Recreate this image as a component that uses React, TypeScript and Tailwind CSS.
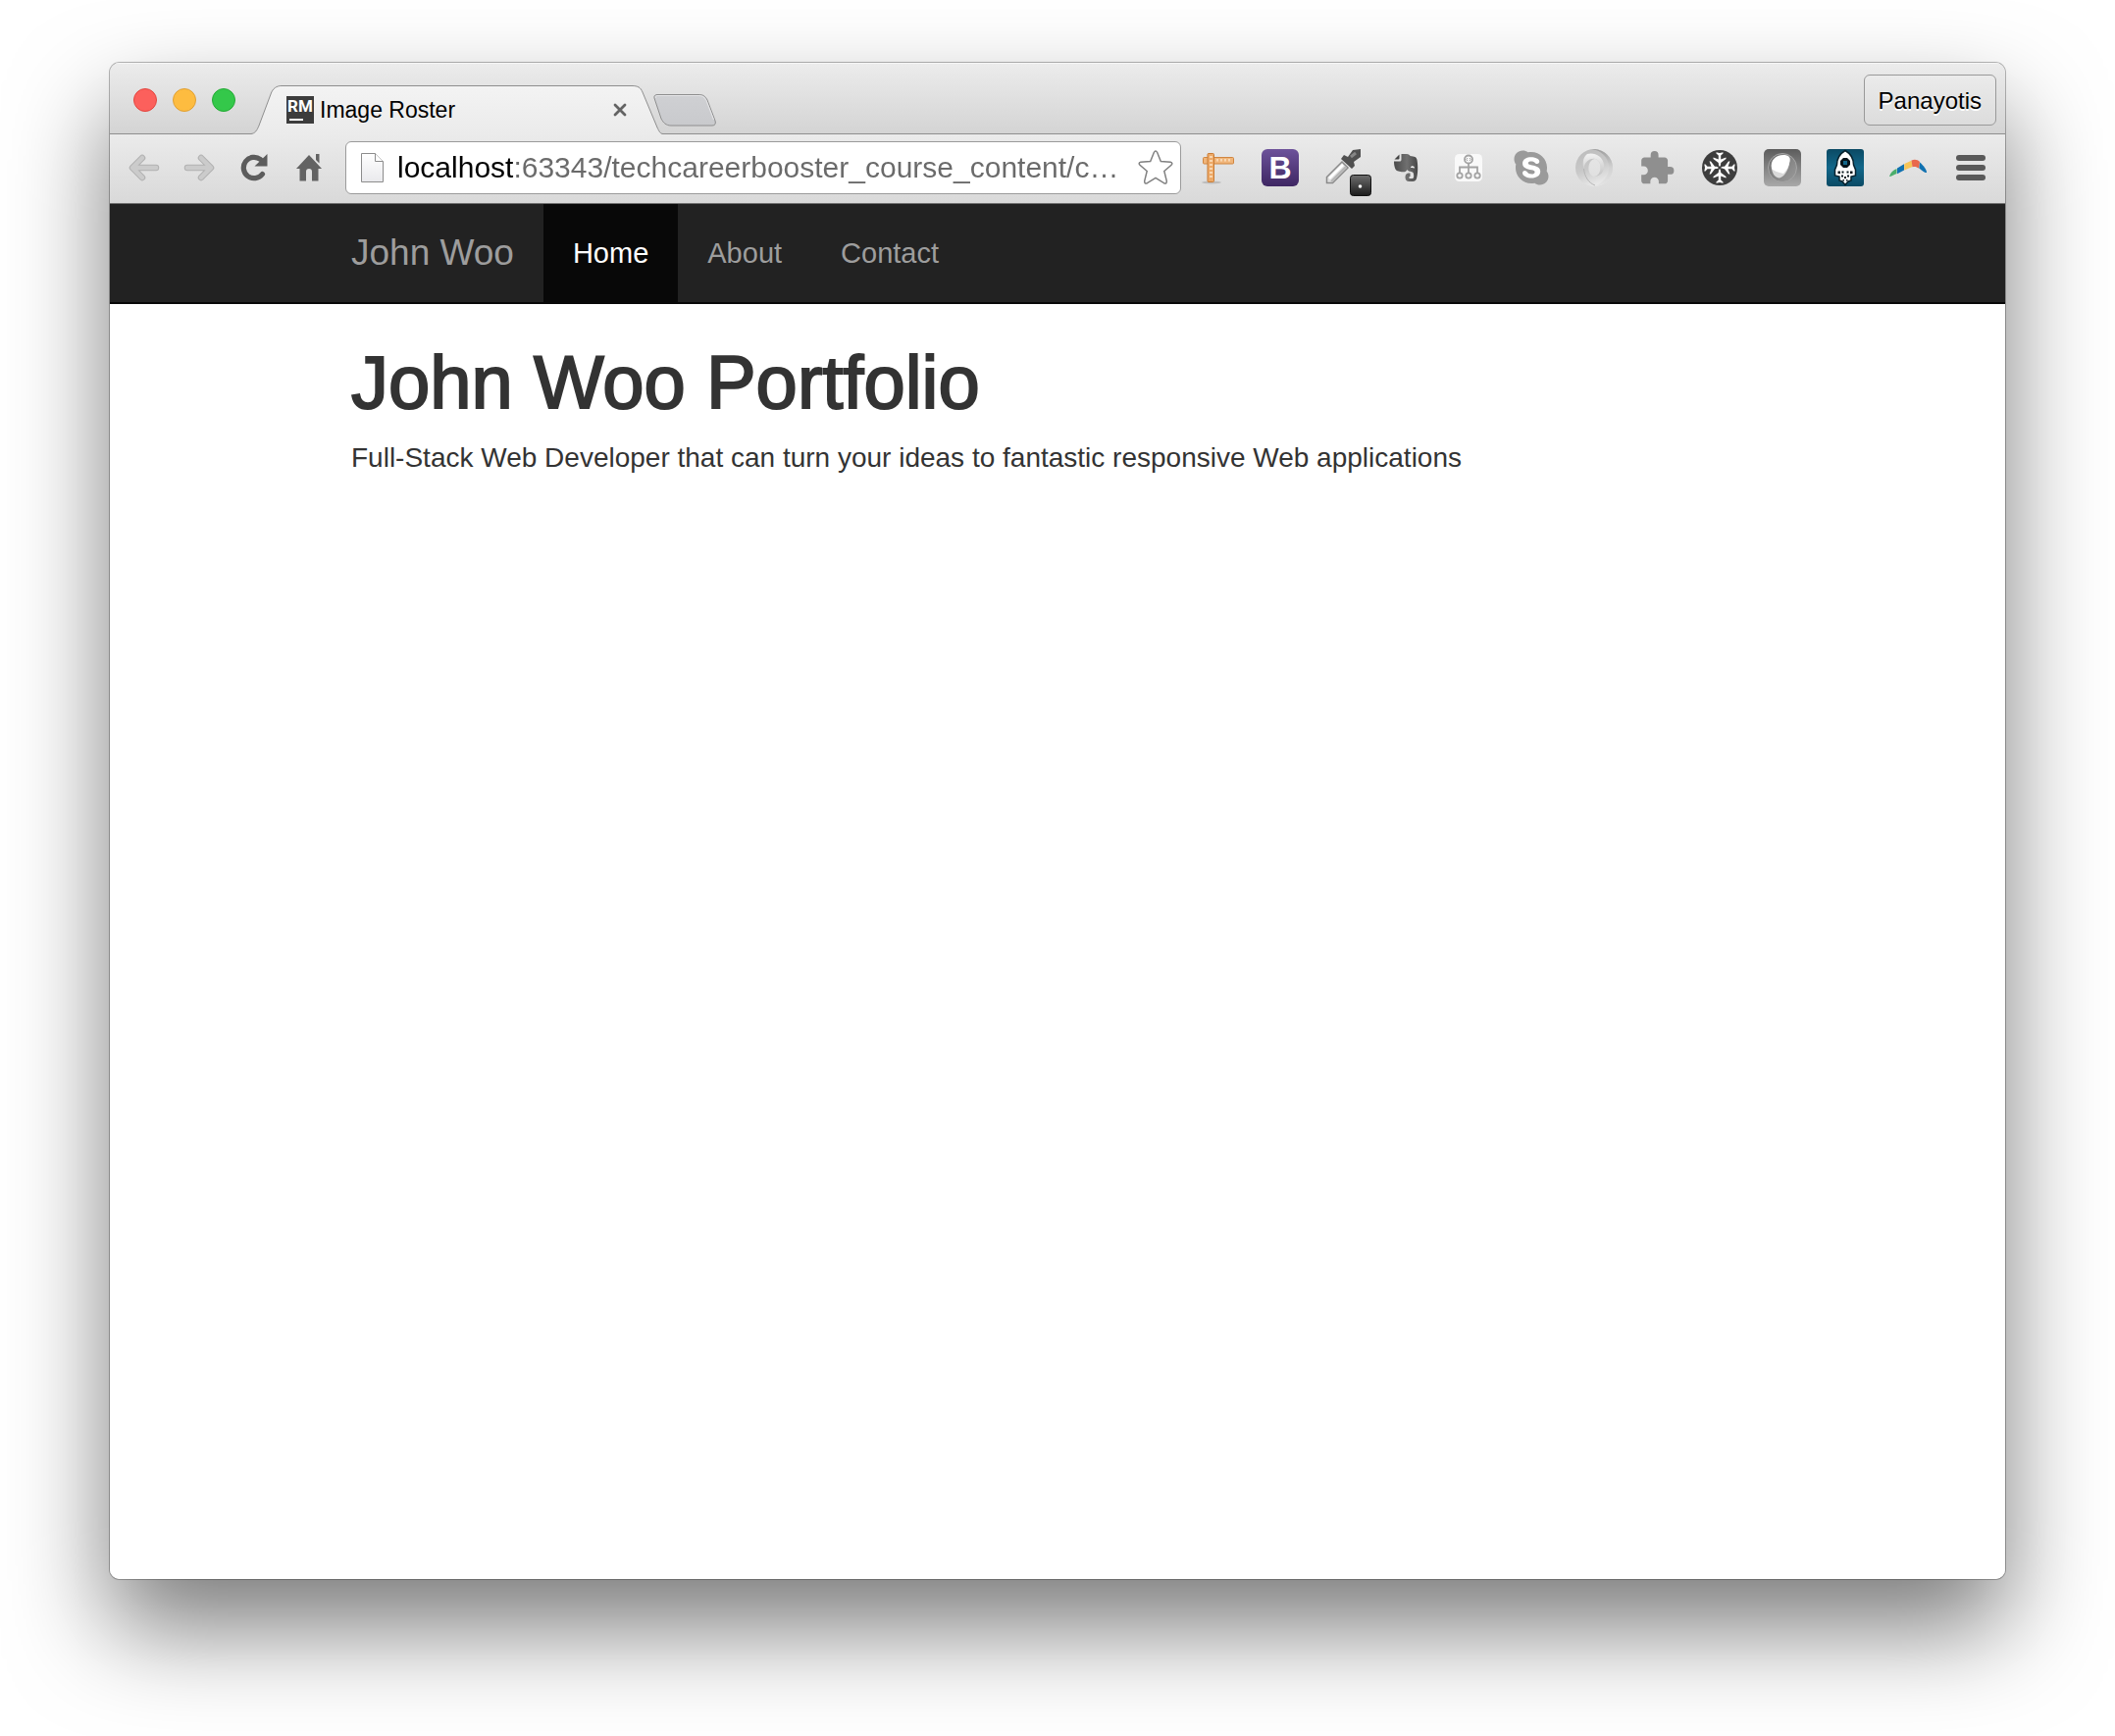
import React from "react";
import { FaSkype } from "react-icons/fa";
import { MdExtension } from "react-icons/md";

const navLinks = [
  { label: "Home", active: true },
  { label: "About", active: false },
  { label: "Contact", active: false },
];

function Tab() {
  return (
    <div className="relative -mb-px flex h-[50px] w-[420px] items-center pr-[37px] pl-9">
      <svg className="absolute inset-0" width="420" height="50" viewBox="0 0 420 50" aria-hidden="true">
        <defs>
          <linearGradient id="tabFill" x1="0" y1="0" x2="0" y2="1">
            <stop offset="0" stopColor="#f3f3f3" />
            <stop offset="1" stopColor="#ebebeb" />
          </linearGradient>
        </defs>
        <path
          d="M0 50 V49.5 C4 49 6 46 8 41 L20 9 C22 3 26 .5 31 .5 H388 C394 .5 397 2 399 7 L414 43 C416 47 417 49.5 420 49.5 V50 Z"
          fill="url(#tabFill)"
        />
        <path
          d="M0 49.5 C4 49 6 46 8 41 L20 9 C22 3 26 .5 31 .5 H388 C394 .5 397 2 399 7 L414 43 C416 47 417 49.5 420 49.5"
          fill="none"
          stroke="#8e8e8e"
        />
      </svg>
      <span className="relative flex h-7 w-7 flex-col items-center bg-[#3c3c3c] font-['Roboto',sans-serif] text-[17px] leading-5 font-bold text-white">
        RM
        <span className="ml-[3px] h-[2px] w-[14px] translate-y-[3px] self-start bg-white" />
      </span>
      <span className="relative ml-[6px] flex-1 text-[23px] text-black">Image Roster</span>
      <button aria-label="Close tab" className="relative">
        <svg width="14" height="14" viewBox="0 0 14 14">
          <path d="M2 2 L12 12 M12 2 L2 12" stroke="#636363" strokeWidth="2.8" strokeLinecap="round" />
        </svg>
      </button>
    </div>
  );
}

function TitleBar() {
  return (
    <div className="flex h-[73px] items-end border-b border-[#8e8e8e] bg-linear-to-b from-[#ececec] to-[#d4d4d4] pr-[9px] pl-6 shadow-[inset_0_1px_0_#f6f6f6]">
      <div className="mb-[22px] flex gap-4">
        <button aria-label="Close" className="h-6 w-6 rounded-full border border-[#e2463f] bg-[#fc605c]" />
        <button aria-label="Minimize" className="h-6 w-6 rounded-full border border-[#e0a034] bg-[#fdbc40]" />
        <button aria-label="Zoom" className="h-6 w-6 rounded-full border border-[#24ab35] bg-[#34c84a]" />
      </div>
      <div className="ml-4 flex items-end">
        <Tab />
        <button aria-label="New tab" className="-ml-[10px] mb-[7px]">
          <svg width="65" height="33" viewBox="0 0 65 33">
            <defs>
              <linearGradient id="newTab" x1="0" y1="0" x2="0" y2="1">
                <stop offset="0" stopColor="#cfd0d3" />
                <stop offset="1" stopColor="#c9cacd" />
              </linearGradient>
            </defs>
            <path
              d="M1 4 C.5 2 1.500 .5 4 .5 H46 C51 .5 53 2 55 6 L63 27 C64 30 63 32 60 32 H18 C13 32 10 29 8 25 Z"
              fill="url(#newTab)"
              stroke="#8e8e8e"
            />
            <path
              d="M2.500 4 C2 2.500 3 1.500 4 1.500 H46 C50 1.500 52 3 54 6.500 L61.500 26"
              fill="none"
              stroke="#e6e6e8"
            />
          </svg>
        </button>
      </div>
      <button className="mb-2 ml-auto h-[52px] rounded-[6px] border border-[#999] bg-linear-to-b from-[#ebebeb] to-[#dcdcdc] px-[14px] pt-[2px] text-2xl text-black [text-shadow:0_2px_0_#fff]">
        Panayotis
      </button>
    </div>
  );
}

function Arrow({ label, flip }: { label: string; flip?: boolean }) {
  const d = "M28 14 H5 M14 4 L4 14 L14 24";
  return (
    <button aria-label={label}>
      <svg width="32" height="28" viewBox="0 0 32 28" fill="none" strokeLinecap="round" strokeLinejoin="round" className={flip ? "-scale-x-100" : ""}>
        <path d={d} stroke="#b2b2b2" strokeWidth="6.500" />
        <path d={d} stroke="#cbcbcb" strokeWidth="4.500" />
      </svg>
    </button>
  );
}

function RulerIcon() {
  return (
    <svg width="38" height="38" viewBox="0 0 38 38">
      <ellipse cx="13" cy="34" rx="10" ry="1.500" fill="#bdbdbd" />
      <rect x="4.500" y="8.500" width="31" height="6.500" rx="1" fill="#f0b57a" stroke="#d08641" />
      <path d="M19 10 V12.500 M23 10 V12.500 M27 10 V12.500 M31 10 V12.500" stroke="#fbe3c6" strokeWidth="1.500" />
      <rect x="9" y="4.500" width="6.500" height="29" rx="1" fill="#eda967" stroke="#c97c36" />
      <path d="M11 8 H14 M11 12 H14 M11 16 H14 M11 20 H14 M11 24 H14 M11 28 H14" stroke="#fbe3c6" strokeWidth="1.500" />
    </svg>
  );
}

function DropperIcon() {
  return (
    <svg width="38" height="38" viewBox="0 0 38 38" className="overflow-visible">
      <defs>
        <linearGradient id="badge" x1="0" y1="0" x2="0" y2="1">
          <stop offset="0" stopColor="#6e6e6e" />
          <stop offset="1" stopColor="#1b1b1b" />
        </linearGradient>
      </defs>
      <path d="M2.500 34.500 V28.500 L18 13 L24 19 L8.500 34.500 Z" fill="#dedede" stroke="#8a8a8a" strokeWidth="1.500" />
      <path d="M5 30 L19 16" stroke="#fff" strokeWidth="2.500" />
      <path d="M7 33 L22 18" stroke="#b5b5b5" strokeWidth="2" />
      <path d="M17 10 L20 6 L24 8 L29 1 L37 0 V8 L30 13 L31 17 L28 20 Z" fill="#505050" />
      <path d="M27 8 L32 4" stroke="#858585" strokeWidth="3" />
      <rect x="26.500" y="26.500" width="21" height="21" rx="3" fill="url(#badge)" stroke="#111" />
      <circle cx="36.500" cy="38" r="1.800" fill="#fff" />
    </svg>
  );
}

function ElephantIcon() {
  return (
    <svg width="38" height="38" viewBox="0 0 38 38">
      <defs>
        <linearGradient id="elephant" x1="0" y1="0" x2="1" y2="0">
          <stop offset="0" stopColor="#4a4a4a" />
          <stop offset=".55" stopColor="#707070" />
          <stop offset="1" stopColor="#464646" />
        </linearGradient>
      </defs>
      <path
        d="M14.500 5 H20 C22 5 23 6 23.500 7 C28 7.500 30 8 30.500 11 C31.600 17 31.500 25 30 30 C29.500 32 28 33 26 33 H22.500 C19.500 33 18.500 31 18.500 28.500 C18.500 26 20 24.500 22 24.500 H23.500 V28 H22.500 V30 H26 C27.500 30 27.500 26 26.500 24 C25 22.500 22 23.500 20.500 21 C19.500 23 18 23.500 16 23.300 C13 23 9.500 22.500 8.500 20.500 C7.300 18 7 15 7 12.500 H12.500 C14 12.500 14.500 12 14.500 10.500 Z"
        fill="url(#elephant)"
      />
      <path d="M7.500 10.500 L12.500 5.500 V9.500 Q12.500 10.500 11.500 10.500 Z" fill="#444" />
      <path d="M24 19 C24 16.500 28 16.500 28 19.500 C27 18.800 25 18.800 24 19 Z" fill="#efefef" />
    </svg>
  );
}

function SitemapIcon() {
  return (
    <svg width="38" height="38" viewBox="0 0 38 38" fill="none" stroke="#a3a3a3" strokeWidth="1.800">
      <rect x="5" y="5" width="28" height="28" rx="4.500" fill="#f9f9f9" stroke="none" />
      <path d="M19 14.500 V24 M10 24 V18.500 H28 V24" />
      <circle cx="19" cy="10.500" r="4" />
      <path d="M18 9 L16.800 10.500 L18 12 M20 9 L21.200 10.500 L20 12" strokeWidth="1" />
      <circle cx="10" cy="27" r="2.700" />
      <circle cx="19" cy="27" r="2.700" />
      <circle cx="28" cy="27" r="2.700" />
    </svg>
  );
}

function RingIcon() {
  return (
    <svg width="38" height="38" viewBox="0 0 38 38">
      <defs>
        <linearGradient id="ringA" x1="0.200" y1="0" x2="0.600" y2="1">
          <stop offset="0" stopColor="#bcbcbc" />
          <stop offset=".5" stopColor="#c9c9c9" />
          <stop offset="1" stopColor="#ececec" />
        </linearGradient>
        <linearGradient id="ringB" x1="0" y1="0" x2="0" y2="1">
          <stop offset="0" stopColor="#9c9c9c" />
          <stop offset=".5" stopColor="#d2d2d2" />
          <stop offset="1" stopColor="#e4e4e4" />
        </linearGradient>
        <linearGradient id="ringC" x1="0" y1="0" x2="0" y2="1">
          <stop offset="0" stopColor="#f2f2f2" />
          <stop offset="1" stopColor="#c2c2c2" />
        </linearGradient>
      </defs>
      <path
        d="M19 0 A19 19 0 1 0 19 38 A19 19 0 1 0 19 0 Z M20 10 C24 11 26 15 25.500 20 C25 25 22 28 19 28 C15 27 13 23 13.500 18 C14 13 17 10 20 10 Z"
        fillRule="evenodd"
        fill="url(#ringA)"
      />
      <path d="M16 0 C28 -1 38 8 38 19 C38 30 30 38 19 38 C29 34 35 26 34 17 C33 8 26 1 16 0 Z" fill="url(#ringB)" />
      <path d="M12 5 C19 3 28 7 29 16 C30 23 25 28 19 28 C22 28 25 25 25.500 20 C26 15 24 11 20 10 C14 9 9 14 8.500 20 C7 13 8 8 12 5 Z" fill="url(#ringC)" />
      <path d="M8.500 20 C9 28 14 35 20 37" fill="none" stroke="#b5b5b5" />
    </svg>
  );
}

const plane = "M19 18 C18.200 17 17.800 16 17.800 14 L12.500 10 V8.500 L17.800 10.500 V6.500 L15.500 4.500 V3.300 L19 4 L22.500 3.300 V4.500 L20.200 6.500 V10.500 L25.500 8.500 V10 L20.200 14 C20.200 16 19.800 17 19 18 Z";

function PlanesIcon() {
  return (
    <svg width="38" height="38" viewBox="0 0 38 38">
      <circle cx="19" cy="19" r="18" fill="#3d3d3d" />
      <g fill="#fff">
        <path d={plane} />
        <path d={plane} transform="rotate(90 19 19)" />
        <path d={plane} transform="rotate(180 19 19)" />
        <path d={plane} transform="rotate(270 19 19)" />
      </g>
    </svg>
  );
}

function LensIcon() {
  return (
    <svg width="38" height="38" viewBox="0 0 38 38">
      <defs>
        <linearGradient id="lens" x1="0" y1="0" x2="0" y2="1">
          <stop offset="0" stopColor="#5c5c5c" />
          <stop offset="1" stopColor="#a9a9a9" />
        </linearGradient>
        <linearGradient id="lensDisc" x1="0" y1="0" x2="1" y2="1">
          <stop offset="0" stopColor="#6d6d6d" />
          <stop offset="1" stopColor="#9b9b9b" />
        </linearGradient>
      </defs>
      <rect width="38" height="38" rx="5" fill="url(#lens)" />
      <circle cx="19" cy="19" r="14.500" fill="url(#lensDisc)" stroke="#a5a5a5" />
      <path d="M8 20 C9 26 12 29.500 16 29.500 C22 28 27 18 26.500 9 Z" fill="#dadada" />
      <path d="M8 20 C6 12 12 6 20 6 C25 6 27 8 26.500 12 C25.500 18 23 22 20 25 C15 24 10 22 8 20 Z" fill="#fff" />
    </svg>
  );
}

function RocketIcon() {
  return (
    <svg width="38" height="38" viewBox="0 0 38 38">
      <defs>
        <linearGradient id="rocketBg" x1="0" y1="0" x2="0" y2="1">
          <stop offset="0" stopColor="#0b4a64" />
          <stop offset=".5" stopColor="#12678a" />
          <stop offset="1" stopColor="#0b4a64" />
        </linearGradient>
      </defs>
      <rect width="38" height="38" rx="3" fill="url(#rocketBg)" />
      <path d="M19 1.500 C13 5 10.500 10 10.500 16 L8.500 21 V27 L13 28 V32 L16 33 L19 36.500 L22 33 L25 32 V28 L29.500 27 V21 L27.500 16 C27.500 10 25 5 19 1.500 Z" fill="#fff" stroke="#06222e" strokeWidth="1.500" />
      <path d="M17 9 H21 L24 12 V16 L21 19 H17 L14 16 V12 Z" fill="#06141b" />
      <rect x="17" y="12" width="4" height="4" fill="#12678a" />
      <g fill="#06141b">
        <rect x="11.500" y="22.500" width="2.500" height="2.500" />
        <rect x="15.500" y="22.500" width="2" height="2" />
        <rect x="20.500" y="22.500" width="2" height="2" />
        <rect x="24" y="22.500" width="2.500" height="2.500" />
        <rect x="15" y="26.500" width="2" height="2" />
        <rect x="18" y="28" width="2" height="2" />
        <rect x="21" y="26.500" width="2" height="2" />
        <rect x="16.500" y="31" width="1.500" height="1.500" />
        <rect x="20" y="31" width="1.500" height="1.500" />
      </g>
    </svg>
  );
}

function BoomerangIcon() {
  return (
    <svg width="38" height="38" viewBox="0 0 38 38">
      <path d="M0 28 C1 24 4 21.500 7.500 20 V25 C4 26.500 1 28.500 0 28 Z" fill="#4aae6b" />
      <path d="M8 19.500 L15 15.200 V21.500 L8 25.200 Z" fill="#1071b0" />
      <path d="M15.300 15 L22.500 11.800 L23.500 18 L15.300 21.500 Z" fill="#f6c557" />
      <path d="M22.500 11.500 C26 10.200 29 11 31 13 L30 19.500 C27.500 17.800 26 17.500 23.500 18.300 Z" fill="#e9684c" />
      <path d="M31 13.500 C35 17 38 21 38 24 C36 24.500 32 21 30.300 19.500 Z" fill="#1071b0" />
    </svg>
  );
}

const extensions: { name: string; icon: React.ReactNode }[] = [
  { name: "Page ruler", icon: <RulerIcon /> },
  {
    name: "Bootstrap",
    icon: (
      <span className="flex h-[38px] w-[38px] items-center justify-center rounded-[6px] bg-linear-to-b from-[#6d529a] to-[#3f2763] text-[32px] leading-none font-bold text-white">
        B
      </span>
    ),
  },
  { name: "Color picker", icon: <DropperIcon /> },
  { name: "Evernote", icon: <ElephantIcon /> },
  { name: "Site map", icon: <SitemapIcon /> },
  {
    name: "Skype",
    icon: (
      <span className="flex bg-[radial-gradient(circle,#fff_12px,transparent_13px)]">
        <FaSkype size={40} color="#9a9a9a" />
      </span>
    ),
  },
  { name: "JSON view", icon: <RingIcon /> },
  { name: "Extension", icon: <MdExtension size={39} color="#8f8f8f" /> },
  { name: "Travel", icon: <PlanesIcon /> },
  { name: "Lens", icon: <LensIcon /> },
  { name: "Rocket", icon: <RocketIcon /> },
  { name: "Boomerang", icon: <BoomerangIcon /> },
];

function Toolbar() {
  return (
    <div className="flex items-center border-b border-[#6f6f6f] bg-linear-to-b from-[#ebebeb] to-[#d9d9d9] pt-[7px] pr-5 pb-[9px] pl-[19px]">
      <div className="flex items-center gap-6">
        <Arrow label="Back" />
        <Arrow label="Forward" flip />
      </div>
      <button aria-label="Reload" className="ml-[26px]">
        <svg width="28" height="28" viewBox="0 0 28 28">
          <path d="M22.500 20.500 A10.700 10.700 0 1 1 20.500 5.500" fill="none" stroke="#5c5c5c" strokeWidth="5.200" strokeLinecap="round" />
          <path d="M27.500 0 V12.500 H14.500 Z" fill="#5c5c5c" />
        </svg>
      </button>
      <button aria-label="Home page" className="ml-7">
        <svg width="28" height="28" viewBox="0 0 28 28" fill="#636363">
          <path d="M14 1 L27 15 H23.500 V27.500 H17 V18 Q17 15 14 15 Q11 15 11 18 V27.500 H4.500 V15 H1 Z" />
          <path d="M21 0 H24.500 V9.500 L21 6 Z" />
        </svg>
      </button>
      <div className="ml-[23px] flex h-[54px] min-w-0 flex-1 items-center rounded-[6px] border border-[#9b9b9b] bg-white pr-[7px] pl-[15px]">
        <svg width="23" height="30" viewBox="0 0 23 30" className="shrink-0">
          <defs>
            <linearGradient id="file" x1="0" y1="0" x2="0" y2="1">
              <stop offset="0" stopColor="#fff" />
              <stop offset="1" stopColor="#e9e9ec" />
            </linearGradient>
          </defs>
          <path d="M.5 .5 H14.500 L22.500 8.500 V29.500 H.5 Z" fill="url(#file)" stroke="#8c8c8c" />
          <path d="M14.500 .5 V8.500 H22.500" fill="#fff" stroke="#8c8c8c" />
        </svg>
        <input
          aria-label="Address"
          readOnly
          value="localhost:63343/techcareerbooster_course_content/c…"
          className="ml-[14px] min-w-0 flex-1 bg-[linear-gradient(90deg,#000_118px,#6a6a6a_118px)] bg-clip-text text-[30px] leading-10 text-transparent outline-none"
        />
        <button aria-label="Bookmark" className="shrink-0">
          <svg width="36" height="36" viewBox="0 0 36 36">
            <path
              d="M16.300 2.500 Q18 -.5 19.700 2.500 L23.300 11.500 L33.200 12.200 Q36 13 34 15.200 L26.800 21.500 L29.300 31.500 Q29.500 35 26.500 33.700 L18 28.300 L9.500 33.700 Q6.500 35 6.700 31.500 L9.200 21.500 L2 15.200 Q0 13 2.800 12.200 L12.700 11.500 Z"
              fill="#fff"
              stroke="#808080"
              strokeWidth="1.500"
            />
          </svg>
        </button>
      </div>
      <div className="ml-[18px] flex items-center gap-[26px]">
        {extensions.map((ext) => (
          <button key={ext.name} aria-label={ext.name} className="flex h-[38px] w-[38px] items-center justify-center">
            {ext.icon}
          </button>
        ))}
      </div>
      <button aria-label="Menu" className="ml-[30px] flex w-[30px] flex-col gap-1">
        <span className="h-[6px] rounded-full bg-[#595959]" />
        <span className="h-[6px] rounded-full bg-[#595959]" />
        <span className="h-[6px] rounded-full bg-[#595959]" />
      </button>
    </div>
  );
}

function Site() {
  return (
    <div className="flex-1 bg-white text-[#333]">
      <nav className="border-b-2 border-[#080808] bg-[#222]">
        <div className="mx-auto flex w-full max-w-[1500px] text-[29px] leading-10 text-[#9d9d9d]">
          <a href="#" className="p-[30px] text-[37px] leading-10">
            John Woo
          </a>
          {navLinks.map((link) => (
            <a key={link.label} href="#" className={link.active ? "bg-[#080808] p-[30px] text-white" : "p-[30px]"}>
              {link.label}
            </a>
          ))}
        </div>
      </nav>
      <main className="mx-auto w-full max-w-[1500px] px-[30px] pt-10">
        <h1 className="mb-[18px] text-[76px] leading-[79px] font-medium [-webkit-text-stroke:2px_#333]">John Woo Portfolio</h1>
        <p className="text-[28px] leading-10">
          Full-Stack Web Developer that can turn your ideas to fantastic responsive Web applications
        </p>
      </main>
    </div>
  );
}

export default function App() {
  return (
    <div className="flex min-h-screen flex-col overflow-hidden bg-white px-28 pt-16 pb-40 font-['Liberation_Sans',Arial,sans-serif]">
      <div className="flex flex-1 flex-col rounded-[10px] shadow-[0_0_0_1px_rgba(0,0,0,0.28),0_50px_100px_rgba(0,0,0,0.52)]">
        <div className="flex flex-1 flex-col overflow-hidden rounded-[10px]">
          <TitleBar />
          <Toolbar />
          <Site />
        </div>
      </div>
    </div>
  );
}
